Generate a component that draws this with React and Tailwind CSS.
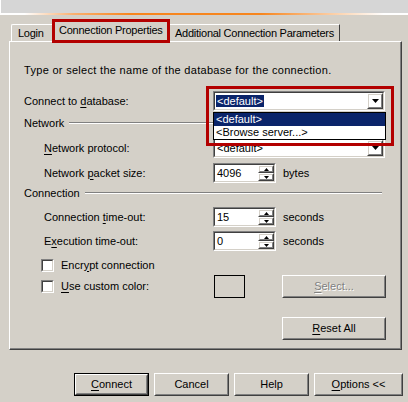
import React from 'react';

const Raised = ({ className = '', inner = '', children }) => (
  <div className={`border border-t-white border-l-white border-r-[#404040] border-b-[#404040] ${className}`}>
    <div className={`w-full h-full border border-t-[#d4d0c8] border-l-[#d4d0c8] border-r-[#808080] border-b-[#808080] flex items-center justify-center ${inner}`}>
      {children}
    </div>
  </div>
);

const Sunken = ({ className = '', inner = 'bg-white', children }) => (
  <div className={`border border-t-[#808080] border-l-[#808080] border-r-white border-b-white ${className}`}>
    <div className={`w-full h-full border border-t-[#404040] border-l-[#404040] border-r-[#d4d0c8] border-b-[#d4d0c8] flex items-center ${inner}`}>
      {children}
    </div>
  </div>
);

const U = ({ children }) => <span className="underline underline-offset-[2px]">{children}</span>;

const Arrow = ({ up = false, size = 'big' }) => {
  if (size === 'big') {
    return (
      <svg width="7" height="4" viewBox="0 0 7 4">
        <path d="M0 0h7L3.5 4z" fill="#000" />
      </svg>
    );
  }
  return (
    <svg width="5" height="3" viewBox="0 0 5 3">
      <path d={up ? 'M2.5 0L5 3H0z' : 'M0 0h5L2.5 3z'} fill="#000" />
    </svg>
  );
};

const Combo = ({ selected = false }) => (
  <Sunken className="w-[172px] h-[20px]">
    <div className="flex-1 pl-[1px]">
      <span className={selected ? 'bg-[#0a246a] text-white px-[1px]' : 'px-[1px]'}>&lt;default&gt;</span>
    </div>
    <Raised className="w-[16px] h-full">
      <Arrow />
    </Raised>
  </Sunken>
);

const Spin = ({ value }) => (
  <Sunken className="w-[63px] h-[20px]">
    <div className="flex-1 pl-[2px]">{value}</div>
    <div className="flex flex-col h-full w-[16px]">
      <Raised className="w-full flex-1">
        <Arrow up size="small" />
      </Raised>
      <Raised className="w-full flex-1">
        <Arrow size="small" />
      </Raised>
    </div>
  </Sunken>
);

const Check = () => <Sunken className="w-[13px] h-[13px]" />;

const Group = ({ label }) => (
  <div className="flex items-center h-[14px] mt-[5px] pr-[18px]">
    <span>{label}</span>
    <div className="flex-1 ml-[5px] h-[2px] border-t border-t-[#808080] border-b border-b-white" />
  </div>
);

const Button = ({ children, className = '', def = false }) =>
  def ? (
    <div className={`border border-black ${className}`}>
      <Raised className="w-full h-full">{children}</Raised>
    </div>
  ) : (
    <Raised className={className}>{children}</Raised>
  );

export default function App() {
  return (
    <div
      className="relative w-[408px] h-[402px] overflow-hidden bg-[#d4d0c8] text-black text-[11px] leading-[13px]"
      style={{ fontFamily: '"Liberation Sans", Arial, sans-serif' }}
    >
      {/* top strip */}
      <div className="h-[13px] bg-[#d6d6d6] border-l border-white" />
      <div className="h-[2px] bg-[linear-gradient(to_right,#ffffff_6%,#f9b070_18%,#f7861e_32%,#f7861e_64%,#fbc89a_80%,#ffffff_94%)]" />

      {/* tabs */}
      <div className="mt-[5px] h-[21px] flex items-end pl-[11px] relative z-10 whitespace-nowrap tracking-[-0.25px]">
        <div className="w-[42px] h-[17px] border-t border-l border-t-white border-l-white rounded-tl-[2px] border-r border-r-[#404040] flex items-center pl-[6px]">
          Login
        </div>
        <div className="w-[117px] h-[22px] -mb-px bg-[#d4d0c8] border-t border-l border-t-white border-l-white border-r border-r-[#404040] flex items-start pt-[3px] pl-[5px]">
          Connection Properties
        </div>
        <div className="w-[170px] h-[17px] border-t border-t-white border-r border-r-[#404040] flex items-center pl-[5px]">
          Additional Connection Parameters
        </div>
      </div>

      {/* panel */}
      <div className="ml-[9px] w-[393px] h-[309px] border-t border-l border-t-white border-l-white border-r border-b border-r-[#404040] border-b-[#404040]">
        <div className="w-full h-full border-r border-b border-r-[#808080] border-b-[#808080] pl-[14px] flex flex-col whitespace-nowrap">
          <div className="mt-[21px] h-[14px] flex items-center tracking-[0.3px]">
            Type or select the name of the database for the connection.
          </div>

          <div className="mt-[14px] h-[20px] flex items-center">
            <span className="w-[189px]">
              Connect to <U>d</U>atabase:
            </span>
            <Combo selected />
          </div>

          <Group label="Network" />

          <div className="mt-[8px] h-[20px] flex items-center">
            <span className="w-[169px] ml-[20px]">
              <U>N</U>etwork protocol:
            </span>
            <Combo />
          </div>

          <div className="mt-[5px] h-[20px] flex items-center">
            <span className="w-[169px] ml-[20px]">
              Network <U>p</U>acket size:
            </span>
            <Spin value="4096" />
            <span className="ml-[7px]">bytes</span>
          </div>

          <div className="-mt-[2px]">
            <Group label="Connection" />
          </div>

          <div className="mt-[7px] h-[20px] flex items-center">
            <span className="w-[169px] ml-[20px]">
              Connection <U>t</U>ime-out:
            </span>
            <Spin value="15" />
            <span className="ml-[7px]">seconds</span>
          </div>

          <div className="mt-[4px] h-[20px] flex items-center">
            <span className="w-[169px] ml-[20px]">
              E<U>x</U>ecution time-out:
            </span>
            <Spin value="0" />
            <span className="ml-[7px]">seconds</span>
          </div>

          <div className="mt-[7px] h-[14px] flex items-center">
            <div className="ml-[17px]">
              <Check />
            </div>
            <span className="ml-[7px]">
              Encr<U>y</U>pt connection
            </span>
          </div>

          <div className="mt-[3px] h-[23px] flex items-center">
            <div className="ml-[17px]">
              <Check />
            </div>
            <span className="ml-[7px] w-[153px]">
              <U>U</U>se custom color:
            </span>
            <div className="w-[31px] h-[23px] border border-black" />
            <Raised className="ml-[37px] w-[104px] h-[23px]">
              <span className="text-[#808080] [text-shadow:1px_1px_0_#fff]">
                <U>S</U>elect...
              </span>
            </Raised>
          </div>

          <div className="mt-[19px] h-[23px] flex">
            <Raised className="ml-[258px] w-[104px] h-[23px]">
              <span>
                <U>R</U>eset All
              </span>
            </Raised>
          </div>
        </div>
      </div>

      {/* dialog buttons */}
      <div className="mt-[23px] flex pl-[74px] gap-[5px]">
        <Button def className="w-[75px] h-[23px]">
          <span>
            <U>C</U>onnect
          </span>
        </Button>
        <Button className="w-[75px] h-[23px]">Cancel</Button>
        <Button className="w-[75px] h-[23px]">Help</Button>
        <Button className="w-[89px] h-[23px]">
          <span>
            <U>O</U>ptions &lt;&lt;
          </span>
        </Button>
      </div>

      {/* dropdown list of the open combo */}
      <div className="absolute left-[213px] top-[112px] w-[173px] h-[28px] border border-black bg-white z-20">
        <div className="h-[13px] bg-[#0a246a] text-white pl-[2px] flex items-center">&lt;default&gt;</div>
        <div className="h-[13px] pl-[2px] flex items-center">&lt;Browse server...&gt;</div>
      </div>

      {/* red annotation boxes */}
      <div className="absolute left-[52px] top-[19px] w-[118px] h-[24px] border-[3px] border-[#b30000] z-30" />
      <div className="absolute left-[206px] top-[86px] w-[188px] h-[60px] border-[3px] border-[#b30000] z-30" />
    </div>
  );
}
